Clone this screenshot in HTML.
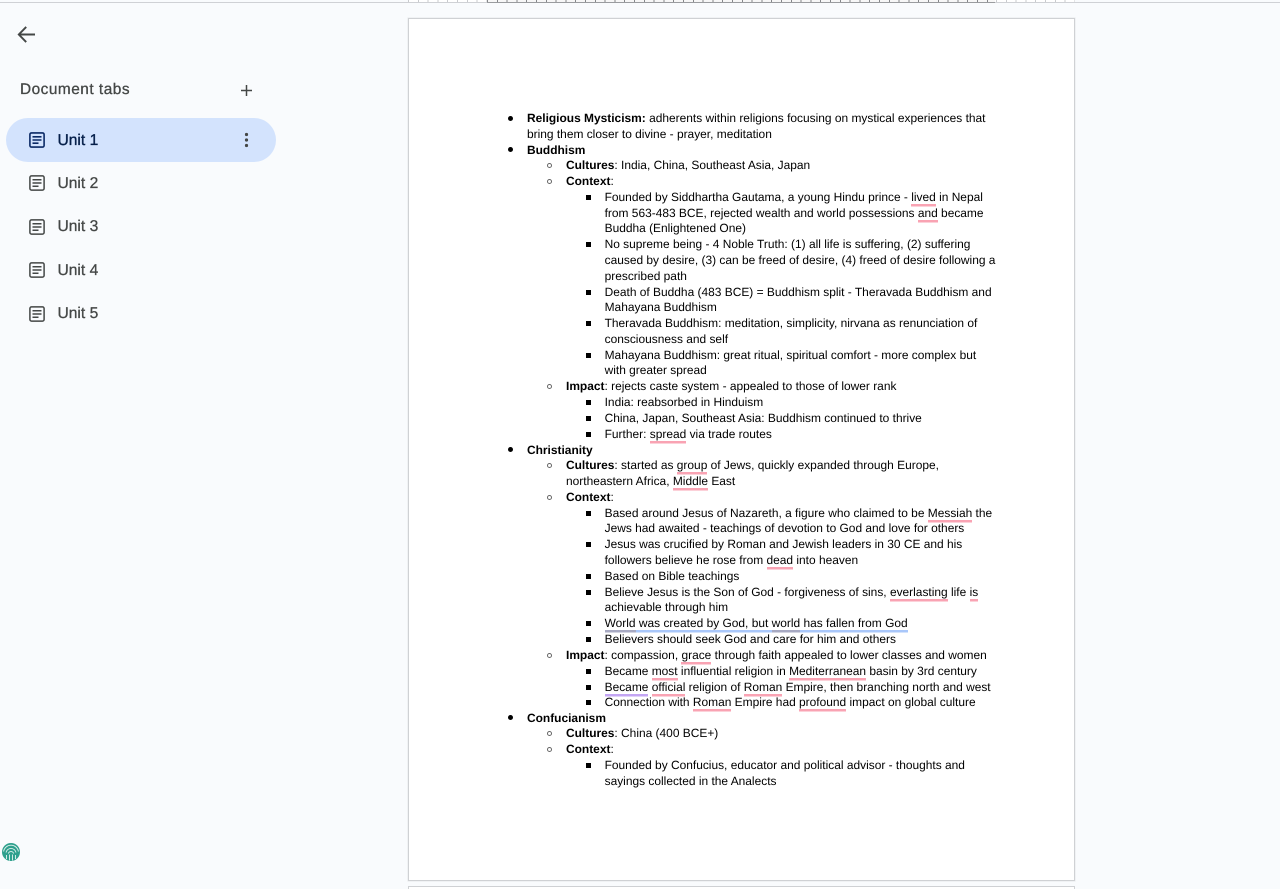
<!DOCTYPE html>
<html><head><meta charset="utf-8"><style>
html,body{margin:0;padding:0;width:1280px;height:889px;overflow:hidden;background:#f9fbfd;font-family:"Liberation Sans",sans-serif}
body{position:relative}
.abs{position:absolute}
#topline{left:0;top:2px;width:1280px;height:1px;background:#cfd1d5}
#ruler{left:408px;top:0;width:667px;height:2px;background:repeating-linear-gradient(90deg,#c9cbce 0 1px,#fff 1px 9.8px)}
#rulerd{left:487px;top:0;width:508px;height:2px;background:repeating-linear-gradient(90deg,#85878a 0 1px,#f7f7f7 1px 9.8px)}
#rulerl{left:487px;top:2px;width:508px;height:1px;background:#9a9c9f}
#page{left:408px;top:18px;width:665px;height:861px;background:#fff;border:1px solid #cfd1d4;box-shadow:0 0 0 .5px #e6e8ea}
#page2{left:408px;top:886px;width:665px;height:3px;background:#fff;border:1px solid #cfd1d4;border-bottom:0;box-sizing:content-box}
#clip{left:0;top:0;width:1280px;height:889px;overflow:hidden}
.l{position:absolute;font-size:11.95px;line-height:16px;color:#000;white-space:pre;text-rendering:geometricPrecision}
.n{margin-left:-.4px}
.b{position:absolute;width:5px;height:5px;background:#000;border-radius:50%}
.c{position:absolute;width:3px;height:3px;border:1px solid #666;border-radius:50%;box-sizing:content-box}
.s{position:absolute;width:5px;height:5px;background:#000}
.r,.u,.p,.g{padding-bottom:2.5px;background-repeat:no-repeat;background-position:left bottom;background-size:100% 2.5px}
.r{background-image:linear-gradient(#f9a3b3,#f9a3b3)}
.u{background-image:linear-gradient(#a9c7fa,#a9c7fa)}
.p{background-image:linear-gradient(#c3a5f3,#c3a5f3)}
.g{background-image:linear-gradient(#a7a9c2,#a7a9c2)}
#pill{left:6px;top:118px;width:270px;height:44px;border-radius:22px;background:#d3e3fd}
.tab{position:absolute;left:57.5px;font-size:15.6px;line-height:20px;color:#444746;-webkit-text-stroke:.3px #444746;text-rendering:geometricPrecision}
.ic{position:absolute;left:29px}
#dt{left:20px;top:80px;font-size:15.4px;line-height:20px;color:#444746;letter-spacing:.5px;-webkit-text-stroke:.3px #444746;text-rendering:geometricPrecision;white-space:pre}
</style></head><body>
<div class="abs" id="clip">
<div class="abs" id="topline"></div>
<div class="abs" id="ruler"></div>
<div class="abs" id="rulerd"></div>
<div class="abs" id="rulerl"></div>
<div class="abs" id="page"></div>
<div class="abs" id="page2"></div>

<svg class="abs" style="left:16px;top:24px" width="21" height="21" viewBox="0 0 21 21" fill="none" stroke="#444746" stroke-width="1.9"><path d="M19 10.5H3M10.2 2.9L2.8 10.5l7.4 7.6"/></svg>
<div class="abs" id="dt">Document tabs</div>
<svg class="abs" style="left:240px;top:84px" width="13" height="13" viewBox="0 0 13 13" fill="none" stroke="#444746" stroke-width="1.5"><path d="M6.5 1v11M1 6.5h11"/></svg>
<div class="abs" id="pill"></div>
<svg class="ic" style="top:132px" width="16" height="16" viewBox="0 0 16 16" fill="none" stroke="#0b2a66" stroke-width="1.6"><rect x=".9" y=".9" width="14.2" height="14.2" rx="1.6"/><path d="M3.5 4.8h9M3.5 8h9M3.5 11.2h6"/></svg>
<div class="tab" style="top:130.5px;color:#041e49;-webkit-text-stroke:.35px #041e49">Unit 1</div>
<svg class="abs" style="left:244px;top:132px" width="5" height="16" viewBox="0 0 5 16" fill="#444746"><circle cx="2.5" cy="2.5" r="1.6"/><circle cx="2.5" cy="8" r="1.6"/><circle cx="2.5" cy="13.5" r="1.6"/></svg>
<svg class="ic" style="top:175px" width="16" height="16" viewBox="0 0 16 16" fill="none" stroke="#444746" stroke-width="1.5"><rect x=".9" y=".9" width="14.2" height="14.2" rx="1.6"/><path d="M3.5 4.8h9M3.5 8h9M3.5 11.2h6"/></svg>
<div class="tab" style="top:173.5px">Unit 2</div>
<svg class="ic" style="top:218.5px" width="16" height="16" viewBox="0 0 16 16" fill="none" stroke="#444746" stroke-width="1.5"><rect x=".9" y=".9" width="14.2" height="14.2" rx="1.6"/><path d="M3.5 4.8h9M3.5 8h9M3.5 11.2h6"/></svg>
<div class="tab" style="top:217px">Unit 3</div>
<svg class="ic" style="top:262px" width="16" height="16" viewBox="0 0 16 16" fill="none" stroke="#444746" stroke-width="1.5"><rect x=".9" y=".9" width="14.2" height="14.2" rx="1.6"/><path d="M3.5 4.8h9M3.5 8h9M3.5 11.2h6"/></svg>
<div class="tab" style="top:260.5px">Unit 4</div>
<svg class="ic" style="top:305.5px" width="16" height="16" viewBox="0 0 16 16" fill="none" stroke="#444746" stroke-width="1.5"><rect x=".9" y=".9" width="14.2" height="14.2" rx="1.6"/><path d="M3.5 4.8h9M3.5 8h9M3.5 11.2h6"/></svg>
<div class="tab" style="top:304px">Unit 5</div>

<svg class="abs" style="left:1px;top:842px" width="20" height="20" viewBox="0 0 20 20" fill="none"><circle cx="10" cy="10" r="9" fill="#2fa08d"/><path d="M2.6 9.5a7.5 7.5 0 0 1 14.8 0M5 10.5a5.1 5.1 0 0 1 10 0M7.4 11.5a2.7 2.7 0 0 1 5.2 0" stroke="#e4f3f0" stroke-width=".9"/><path d="M5.5 13v4M8.5 12.5v6M11.5 12.5v6M14.5 13v4" stroke="#e4f3f0" stroke-width=".9"/></svg>

<div class="l" style="left:527px;top:110px"><b>Religious Mysticism:</b> adherents within religions focusing on mystical experiences that</div>
<div class="l" style="left:527px;top:126px">bring them closer to divine - prayer, meditation</div>
<div class="l" style="left:527px;top:142px"><b>Buddhism</b></div>
<div class="l" style="left:566px;top:157px"><b>Cultures</b>: India, China, Southeast Asia, Japan</div>
<div class="l" style="left:566px;top:173px"><b>Context</b>:</div>
<div class="l n" style="left:605px;top:189px">Founded by Siddhartha Gautama, a young Hindu prince - <span class="r">lived</span> in Nepal</div>
<div class="l n" style="left:605px;top:205px">from 563-483 BCE, rejected wealth and world possessions <span class="r">and</span> became</div>
<div class="l n" style="left:605px;top:220px">Buddha (Enlightened One)</div>
<div class="l n" style="left:605px;top:236px">No supreme being - 4 Noble Truth: (1) all life is suffering, (2) suffering</div>
<div class="l n" style="left:605px;top:252px">caused by desire, (3) can be freed of desire, (4) freed of desire following a</div>
<div class="l n" style="left:605px;top:268px">prescribed path</div>
<div class="l n" style="left:605px;top:284px">Death of Buddha (483 BCE) = Buddhism split - Theravada Buddhism and</div>
<div class="l n" style="left:605px;top:299px">Mahayana Buddhism</div>
<div class="l n" style="left:605px;top:315px">Theravada Buddhism: meditation, simplicity, nirvana as renunciation of</div>
<div class="l n" style="left:605px;top:331px">consciousness and self</div>
<div class="l n" style="left:605px;top:347px">Mahayana Buddhism: great ritual, spiritual comfort - more complex but</div>
<div class="l n" style="left:605px;top:362px">with greater spread</div>
<div class="l" style="left:566px;top:378px"><b>Impact</b>: rejects caste system - appealed to those of lower rank</div>
<div class="l n" style="left:605px;top:394px">India: reabsorbed in Hinduism</div>
<div class="l n" style="left:605px;top:410px">China, Japan, Southeast Asia: Buddhism continued to thrive</div>
<div class="l n" style="left:605px;top:426px">Further: <span class="r">spread</span> via trade routes</div>
<div class="l" style="left:527px;top:442px"><b>Christianity</b></div>
<div class="l" style="left:566px;top:457px"><b>Cultures</b>: started as <span class="r">group</span> of Jews, quickly expanded through Europe,</div>
<div class="l" style="left:566px;top:473px">northeastern Africa, <span class="r">Middle</span> East</div>
<div class="l" style="left:566px;top:489px"><b>Context</b>:</div>
<div class="l n" style="left:605px;top:505px">Based around Jesus of Nazareth, a figure who claimed to be <span class="r">Messiah</span> the</div>
<div class="l n" style="left:605px;top:520px">Jews had awaited - teachings of devotion to God and love for others</div>
<div class="l n" style="left:605px;top:536px">Jesus was crucified by Roman and Jewish leaders in 30 CE and his</div>
<div class="l n" style="left:605px;top:552px">followers believe he rose from <span class="r">dead</span> into heaven</div>
<div class="l n" style="left:605px;top:568px">Based on Bible teachings</div>
<div class="l n" style="left:605px;top:584px">Believe Jesus is the Son of God - forgiveness of sins, <span class="r">everlasting</span> life <span class="r">is</span></div>
<div class="l n" style="left:605px;top:599px">achievable through him</div>
<div class="l n" style="left:605px;top:615px"><span class="g">World</span><span class="u"> was created by God, but </span><span class="g">world</span><span class="u"> has fallen from God</span></div>
<div class="l n" style="left:605px;top:631px">Believers should seek God and care for him and others</div>
<div class="l" style="left:566px;top:647px"><b>Impact</b>: compassion, <span class="r">grace</span> through faith appealed to lower classes and women</div>
<div class="l n" style="left:605px;top:663px">Became <span class="r">most</span> influential religion in <span class="r">Mediterranean</span> basin by 3rd century</div>
<div class="l n" style="left:605px;top:679px"><span class="p">Became</span> <span class="r">official</span> religion of <span class="r">Roman</span> Empire, then branching north and west</div>
<div class="l n" style="left:605px;top:694px">Connection with <span class="r">Roman</span> Empire had <span class="r">profound</span> impact on global culture</div>
<div class="l" style="left:527px;top:710px"><b>Confucianism</b></div>
<div class="l" style="left:566px;top:725px"><b>Cultures</b>: China (400 BCE+)</div>
<div class="l" style="left:566px;top:741px"><b>Context</b>:</div>
<div class="l n" style="left:605px;top:757px">Founded by Confucius, educator and political advisor - thoughts and</div>
<div class="l n" style="left:605px;top:773px">sayings collected in the Analects</div>

<i class="b" style="left:508px;top:116px"></i>
<i class="b" style="left:508px;top:147px"></i>
<i class="b" style="left:508px;top:447px"></i>
<i class="b" style="left:508px;top:715px"></i>
<i class="c" style="left:547px;top:163px"></i>
<i class="c" style="left:547px;top:179px"></i>
<i class="c" style="left:547px;top:384px"></i>
<i class="c" style="left:547px;top:463px"></i>
<i class="c" style="left:547px;top:495px"></i>
<i class="c" style="left:547px;top:653px"></i>
<i class="c" style="left:547px;top:731px"></i>
<i class="c" style="left:547px;top:747px"></i>
<i class="s" style="left:586px;top:195px"></i>
<i class="s" style="left:586px;top:242px"></i>
<i class="s" style="left:586px;top:290px"></i>
<i class="s" style="left:586px;top:321px"></i>
<i class="s" style="left:586px;top:353px"></i>
<i class="s" style="left:586px;top:400px"></i>
<i class="s" style="left:586px;top:416px"></i>
<i class="s" style="left:586px;top:432px"></i>
<i class="s" style="left:586px;top:511px"></i>
<i class="s" style="left:586px;top:542px"></i>
<i class="s" style="left:586px;top:574px"></i>
<i class="s" style="left:586px;top:590px"></i>
<i class="s" style="left:586px;top:621px"></i>
<i class="s" style="left:586px;top:637px"></i>
<i class="s" style="left:586px;top:669px"></i>
<i class="s" style="left:586px;top:685px"></i>
<i class="s" style="left:586px;top:700px"></i>
<i class="s" style="left:586px;top:763px"></i>
</div>
</body></html>
